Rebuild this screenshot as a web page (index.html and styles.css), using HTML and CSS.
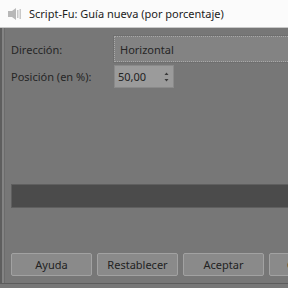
FILE: index.html
```html
<!DOCTYPE html>
<html lang="es">
<head>
<meta charset="utf-8">
<link rel="stylesheet" href="styles.css">
</head>
<body>
<div class="window">
  <div class="titlebar">
    <svg class="app-icon" width="16" height="14" viewBox="0 0 16 14">
      <path d="M1 4 L5 4 L9 1 L9 13 L5 10 L1 10 Z" fill="#b8b8b8"/>
      <rect x="10" y="3" width="1.5" height="8" fill="#c8c8c8"/>
      <rect x="12.5" y="2" width="1.5" height="10" fill="#c8c8c8"/>
    </svg>
    <span class="title">Script-Fu: Guía nueva (por porcentaje)</span>
  </div>
  <div class="dialog">
    <div class="form">
      <label class="label">Dirección:</label>
      <div class="combo">Horizontal</div>
      <label class="label">Posición (en %):</label>
      <div class="spin">
        <span class="spin-value">50,00</span>
        <span class="spin-arrows">
          <svg width="7" height="14" viewBox="0 0 7 14">
            <path d="M1.5 5 L3.5 2.5 L5.5 5 Z" fill="#3a3a3a"/>
            <path d="M1.5 9 L3.5 11.5 L5.5 9 Z" fill="#3a3a3a"/>
          </svg>
        </span>
      </div>
    </div>
    <div class="progress"></div>
    <div class="buttons">
      <button class="btn">Ayuda</button>
      <button class="btn">Restablecer</button>
      <button class="btn">Aceptar</button>
      <button class="btn">Cancelar</button>
    </div>
  </div>
</div>
</body>
</html>
```

FILE: styles.css
```css
html, body {
  margin: 0;
  padding: 0;
  width: 288px;
  height: 288px;
  overflow: hidden;
  background: #777777;
  font-family: "Noto Sans", "Open Sans", sans-serif;
}
.window {
  width: 288px;
  height: 288px;
  display: flex;
  flex-direction: column;
}
.titlebar {
  height: 28px;
  background: #fbfbfb;
  display: flex;
  align-items: center;
  gap: 6px;
  padding-left: 7px;
  box-sizing: border-box;
  border-bottom: 1px solid #c9c9c9;
  flex: none;
}
.app-icon { flex: none; }
.title {
  font-size: 11px;
  color: #1c1c1c;
  white-space: nowrap;
}
.dialog {
  flex: 1;
  background: #777777;
  border-left: 2px solid #5e5e5e;
  box-shadow: inset 2px 0 0 #838383, inset 3px 0 0 #6c6c6c;
  border-bottom: 1px solid #5c5c5c;
  display: flex;
  flex-direction: column;
  padding: 8px 0 7px 9px;
  margin-bottom: 4px;
  overflow: hidden;
}
.form {
  display: grid;
  grid-template-columns: 103px auto;
  row-gap: 3px;
  align-items: center;
  justify-items: start;
}
.label {
  font-size: 11px;
  color: #262626;
  white-space: nowrap;
}
.combo {
  width: 200px;
  height: 26px;
  box-sizing: border-box;
  border: 1px dotted #a9a9a9;
  outline: 1px solid #6f6f6f;
  background: #838383;
  font-size: 11px;
  color: #262626;
  display: flex;
  align-items: center;
  padding-left: 5px;
}
.spin {
  width: 60px;
  height: 23px;
  box-sizing: border-box;
  background: #9b9b9b;
  border: 1px solid #8a8a8a;
  display: flex;
  align-items: center;
  justify-content: space-between;
  padding: 0 3px 0 3px;
  font-size: 11px;
  color: #222;
}
.spin-arrows { display: flex; }
.progress {
  margin-top: 96px;
  height: 24px;
  background: #4b4b4b;
  border: 1px solid #5f5f5f;
  box-sizing: border-box;
  margin-right: -4px;
}
.buttons {
  margin-top: auto;
  display: flex;
  gap: 5px;
}
.btn {
  flex: none;
  width: 81px;
  height: 23px;
  background: #8a8a8a;
  border: 1px solid #a2a2a2;
  border-radius: 2px;
  font-family: "Noto Sans", "Open Sans", sans-serif;
  font-size: 11px;
  color: #222;
  padding: 0;
}
```
